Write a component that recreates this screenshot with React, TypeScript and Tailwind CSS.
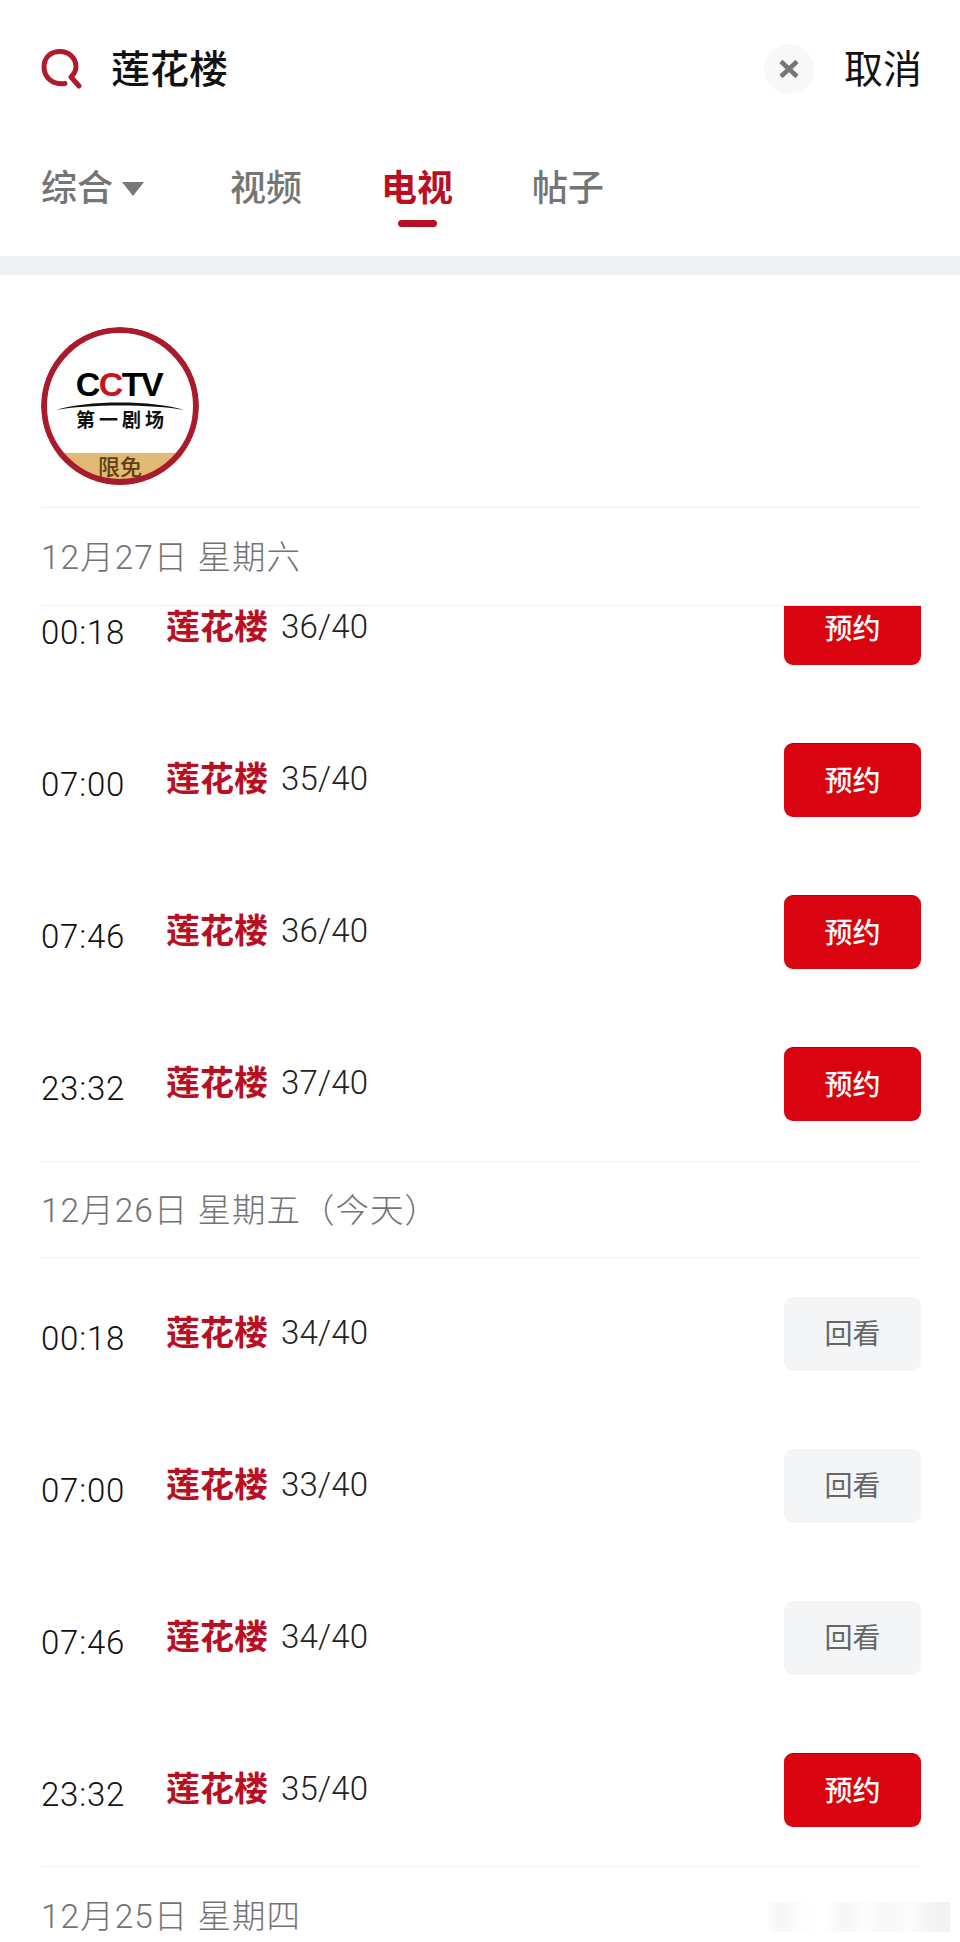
const CJK = "font-['Roboto','Noto_Sans_CJK_SC',sans-serif]";

type Row = { time: string; ep: string; action: "book" | "replay" };

const sat: Row[] = [
  { time: "00:18", ep: "36/40", action: "book" },
  { time: "07:00", ep: "35/40", action: "book" },
  { time: "07:46", ep: "36/40", action: "book" },
  { time: "23:32", ep: "37/40", action: "book" },
];

const fri: Row[] = [
  { time: "00:18", ep: "34/40", action: "replay" },
  { time: "07:00", ep: "33/40", action: "replay" },
  { time: "07:46", ep: "34/40", action: "replay" },
  { time: "23:32", ep: "35/40", action: "book" },
];

function SearchIcon() {
  return (
    <svg width="42" height="42" viewBox="0 0 42 42" fill="none">
      <path
        d="M25 35.500C12 37 4 29 4 19C4 9 11 3.500 20 3.500C29 3.500 36 10 36 19C36 23 34 26 31 29L39 38"
        stroke="#b01a2c"
        strokeWidth="5"
        strokeLinecap="round"
        strokeLinejoin="round"
      />
    </svg>
  );
}

function Logo() {
  return (
    <div className="relative ml-[41px] mt-[52px] h-[158px] w-[158px] rounded-full overflow-hidden flex flex-col items-center bg-white">
      <div className="mt-[43px] flex items-center h-[28px] text-[34px] leading-none font-bold tracking-[-1.500px] pr-[2px] text-black font-['Liberation_Sans',sans-serif]">
        <span>C</span>
        <span className="text-[#c4161c]">C</span>
        <span>TV</span>
      </div>
      <svg className="mt-[1px]" width="128" height="12" viewBox="0 0 128 12">
        <path d="M0 11C30 1 98 1 128 11C98 5 30 5 0 11Z" fill="#111" />
      </svg>
      <div className={`mt-[-1px] text-[19px] leading-[22px] font-bold tracking-[4px] pl-[4px] text-[#111] ${CJK}`}>第一剧场</div>
      <div className="flex-1" />
      <div className={`w-full h-[32px] bg-[#e3b976] text-center text-[22px] leading-[30px] font-medium text-[#5e3f12] ${CJK}`}>
        限免
      </div>
      <div className="absolute inset-0 rounded-full border-[6px] border-[#a91b2c]" />
    </div>
  );
}

function ScheduleRow({ row }: { row: Row }) {
  return (
    <div className="h-[152px] flex items-center">
      <div className="w-[125px] pt-[9px] text-[33px] leading-none font-light tracking-[0.800px] text-[#111] font-['Roboto',sans-serif]">
        {row.time}
      </div>
      <div className={`w-[115px] pb-[3px] text-[34px] leading-none font-bold text-[#b80f24] ${CJK}`}>莲花楼</div>
      <div className="flex-1 pb-[3px] text-[33px] leading-none font-light tracking-[0.200px] text-[#222] font-['Roboto',sans-serif]">
        {row.ep}
      </div>
      {row.action === "book" ? (
        <div className={`w-[137px] h-[74px] pt-[2px] rounded-[9px] bg-[#d9040f] border-t border-[#a5040c] flex items-center justify-center text-[28px] font-medium text-white ${CJK}`}>
          预约
        </div>
      ) : (
        <div className={`w-[137px] h-[74px] pt-[2px] rounded-[9px] bg-[#f4f5f7] flex items-center justify-center text-[28px] text-[#666] ${CJK}`}>
          回看
        </div>
      )}
    </div>
  );
}

function DateHead({ text, h }: { text: string; h: string }) {
  return (
    <div className={`${h} pt-[4px] flex items-center border-t border-[#eff0f1] text-[33.500px] font-light tracking-[1px] text-[#737373] ${CJK}`}>
      {text}
    </div>
  );
}

export default function App() {
  return (
    <div className={`relative w-[960px] h-[1942px] overflow-hidden bg-white ${CJK}`}>
      <div className="h-[137px] pt-[48px] pl-[40px] pr-[38px] flex items-start">
        <SearchIcon />
        <div className="ml-[29px] text-[39px] leading-[44px] font-medium text-[#111]">莲花楼</div>
        <div className="flex-1" />
        <div className="w-[50px] h-[50px] -mt-[4px] rounded-full bg-[#f8f8f9] flex items-center justify-center">
          <svg width="22" height="20" viewBox="0 0 22 20" fill="none">
            <path d="M3 2.500L19 17.500M19 2.500L3 17.500" stroke="#777" strokeWidth="4.500" />
          </svg>
        </div>
        <div className="ml-[30px] text-[39px] leading-[44px] text-[#111]">取消</div>
      </div>

      <div className="h-[119px] pl-[41px] pt-[25px] flex items-start text-[36px] leading-[46px] font-medium text-[#757575]">
        <div className="flex items-center w-[189px] pt-[4px]">
          综合
          <svg className="ml-[9px]" width="22" height="14" viewBox="0 0 22 14">
            <path d="M0 0H22L11 14Z" fill="#777" />
          </svg>
        </div>
        <div className="w-[151px] pt-[4px]">视频</div>
        <div className="w-[151px] pt-[4px] flex flex-col text-[#b80f24] font-bold">
          电视
          <div className="ml-[17px] mt-[8px] w-[39px] h-[7px] rounded-full bg-[#b80f24]" />
        </div>
        <div className="pt-[4px]">帖子</div>
      </div>

      <div className="h-[19px] bg-[#eef0f3]" />

      <Logo />

      <div className="ml-[41px] mr-[39px] mt-[22px]">
        <DateHead text="12月27日 星期六" h="h-[98px]" />
        <div className="h-[556px] overflow-hidden border-t border-[#eff0f1]">
          <div className="-mt-[54px]">
            {sat.map((r) => (
              <ScheduleRow key={r.time} row={r} />
            ))}
          </div>
        </div>
        <DateHead text="12月26日 星期五（今天）" h="h-[96px]" />
        <div className="border-t border-[#eff0f1]">
          {fri.map((r) => (
            <ScheduleRow key={r.time} row={r} />
          ))}
        </div>
        <DateHead text="12月25日 星期四" h="h-[97px]" />
      </div>

      {/* blurred-out watermark, bottom right */}
      <div className="absolute left-[765px] top-[1902px] w-[185px] h-[30px] bg-[linear-gradient(90deg,#ffffff_0%,#f6f6f6_8%,#fdfdfd_20%,#ffffff_32%,#f6f6f6_43%,#fdfdfd_55%,#f7f7f7_65%,#fcfcfc_78%,#f4f4f4_90%,#f2f2f2_100%)]" />
    </div>
  );
}
